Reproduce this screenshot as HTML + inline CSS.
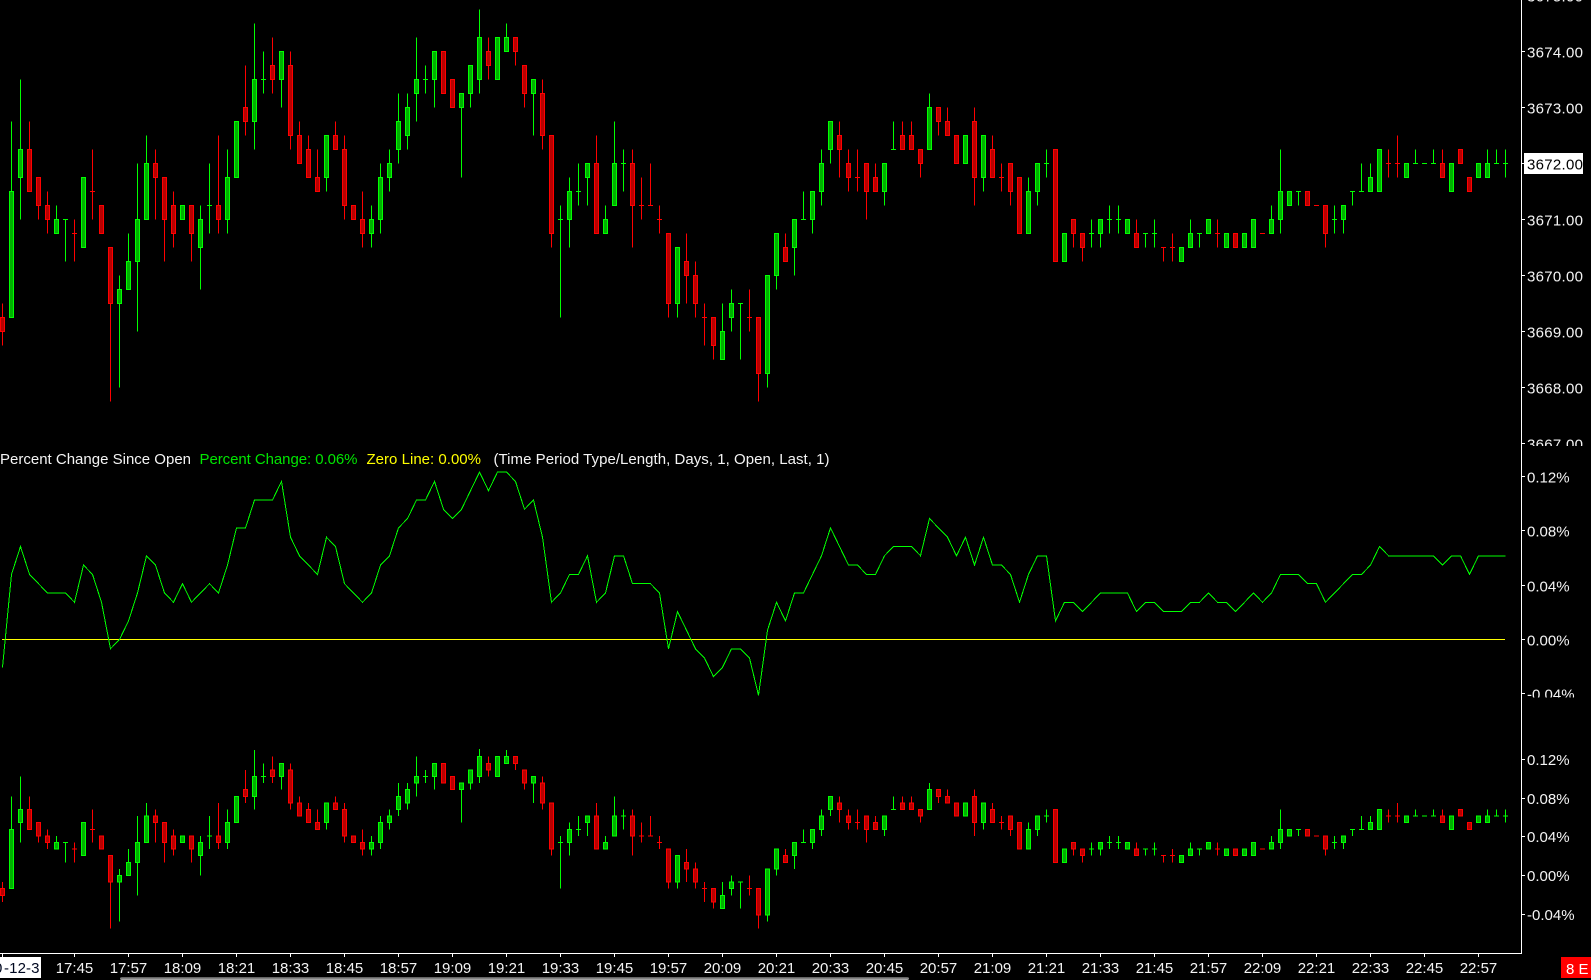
<!DOCTYPE html>
<html lang="en"><head><meta charset="utf-8"><title>Chart</title>
<style>
html,body{margin:0;padding:0;background:#000;width:1591px;height:980px;overflow:hidden}
svg{display:block;position:absolute;left:0;top:0}
text{font-family:"Liberation Sans",sans-serif;font-size:15px;fill:#f4f4f4}
.n{fill:none;vector-effect:non-scaling-stroke}
path,polyline{shape-rendering:crispEdges}
</style></head><body>
<svg width="1591" height="980" viewBox="0 0 1591 980" xmlns="http://www.w3.org/2000/svg">
<defs>
<clipPath id="cb"><rect x="0" y="749" width="1521" height="204"/></clipPath>
<clipPath id="cp"><rect x="1522" y="0" width="69" height="446"/></clipPath>
<clipPath id="cq"><rect x="1522" y="446" width="69" height="251.5"/></clipPath>
<clipPath id="cd"><rect x="0" y="957" width="41" height="21"/></clipPath>
<linearGradient id="sb" x1="0" y1="0" x2="0" y2="1"><stop offset="0" stop-color="#555"/><stop offset="1" stop-color="#b4b4b4"/></linearGradient>
<g id="c">
<path class="n" stroke="#00ff00" stroke-width="1" vector-effect="non-scaling-stroke" d="M1 8V13M2 5V15M6 14V15M7 15V18M7 15m-.28 0h.56M13 19V27M14 16V18M15 11V23M16 9V11M22 14V20M23 11V16M23 14m-.28 0h.56M25 10V16M28 1V10M29 3V6M29 5m-.28 0h.56M31 5V7M36 12V13M41 14V17M42 11V16M43 10V13M44 6V11M45 6V10M46 2V8M47 4V6M47 5m-.28 0h.56M48 5V7M51 7V12M52 6V7M53 0V6M56 1V2M59 6V9M62 14V22M62 15m-.28 0h.56M63 12V17M64 11V14M64 13m-.28 0h.56M65 12V14M67 14V15M68 8V11M69 10V13M69 11m-.28 0h.56M75 21V22M80 21V23M81 20V23M82 21V25M82 21m-.28 0h.56M85 26V27M86 19V20M88 17V19M89 13V15M89 15m-.28 0h.56M90 15V16M91 10V14M92 10V11M98 13V14M99 8V10M99 10m-.28 0h.56M103 6V7M109 12V13M114 12V13M115 13V14M116 10V12M116 11m-.28 0h.56M121 15V17M121 16m-.28 0h.56M122 16V17M123 14V16M123 15m-.28 0h.56M124 14V16M124 15m-.28 0h.56M127 16V17M127 16m-.28 0h.56M128 15V17M128 16m-.28 0h.56M132 15V16M133 16V17M133 16m-.28 0h.56M141 14V15M142 10V16M144 13V14M144 13m-.28 0h.56M148 14V16M148 15m-.28 0h.56M149 15V16M150 13V14M150 13m-.28 0h.56M151 11V13M151 13m-.28 0h.56M152 11V12M157 10V11M157 11m-.28 0h.56M158 11m-.28 0h.56M159 10V11M159 11m-.28 0h.56M165 10V11M166 10V11M166 11m-.28 0h.56M167 10V12M167 11m-.28 0h.56"/>
<path stroke="#00ff00" fill="#00b000" stroke-width="1" vector-effect="non-scaling-stroke" d="M1 13m-.222 0h.444V22h-.444zM2 10m-.222 0h.444V12h-.444zM6 15m-.222 0h.444V16h-.444zM9 12m-.222 0h.444V17h-.444zM13 20m-.222 0h.444V21h-.444zM14 18m-.222 0h.444V20h-.444zM15 15m-.222 0h.444V18h-.444zM16 11m-.222 0h.444V15h-.444zM20 14m-.222 0h.444V15h-.444zM22 15m-.222 0h.444V17h-.444zM25 12m-.222 0h.444V15h-.444zM26 8m-.222 0h.444V12h-.444zM28 5m-.222 0h.444V8h-.444zM31 3m-.222 0h.444V5h-.444zM36 9m-.222 0h.444V12h-.444zM41 15m-.222 0h.444V16h-.444zM42 12m-.222 0h.444V15h-.444zM43 11m-.222 0h.444V12h-.444zM44 8m-.222 0h.444V10h-.444zM45 7m-.222 0h.444V9h-.444zM46 5m-.222 0h.444V6h-.444zM48 3m-.222 0h.444V5h-.444zM51 6m-.222 0h.444V7h-.444zM52 4m-.222 0h.444V6h-.444zM53 2m-.222 0h.444V5h-.444zM55 2m-.222 0h.444V5h-.444zM56 2m-.222 0h.444V3h-.444zM59 5m-.222 0h.444V6h-.444zM63 13m-.222 0h.444V15h-.444zM65 11m-.222 0h.444V12h-.444zM67 15m-.222 0h.444V16h-.444zM68 11m-.222 0h.444V14h-.444zM75 17m-.222 0h.444V21h-.444zM80 23m-.222 0h.444V25h-.444zM81 21m-.222 0h.444V22h-.444zM85 19m-.222 0h.444V26h-.444zM86 16m-.222 0h.444V19h-.444zM88 15m-.222 0h.444V17h-.444zM90 13m-.222 0h.444V15h-.444zM91 11m-.222 0h.444V13h-.444zM92 8m-.222 0h.444V10h-.444zM98 11m-.222 0h.444V13h-.444zM103 7m-.222 0h.444V10h-.444zM107 9m-.222 0h.444V11h-.444zM109 9m-.222 0h.444V12h-.444zM114 13m-.222 0h.444V16h-.444zM115 11m-.222 0h.444V13h-.444zM118 16m-.222 0h.444V18h-.444zM122 15m-.222 0h.444V16h-.444zM125 15m-.222 0h.444V16h-.444zM131 17m-.222 0h.444V18h-.444zM132 16m-.222 0h.444V17h-.444zM134 15m-.222 0h.444V16h-.444zM136 16m-.222 0h.444V17h-.444zM138 16m-.222 0h.444V17h-.444zM139 15m-.222 0h.444V17h-.444zM141 15m-.222 0h.444V16h-.444zM142 13m-.222 0h.444V15h-.444zM143 13m-.222 0h.444V14h-.444zM149 14m-.222 0h.444V15h-.444zM152 12m-.222 0h.444V13h-.444zM153 10m-.222 0h.444V13h-.444zM156 11m-.222 0h.444V12h-.444zM161 11m-.222 0h.444V13h-.444zM164 11m-.222 0h.444V12h-.444zM165 11m-.222 0h.444V12h-.444z"/>
<path class="n" stroke="#ff0000" stroke-width="1" vector-effect="non-scaling-stroke" d="M0 21V24M3 8V10M4 14V15M5 13V16M8 15V18M8 16m-.28 0h.56M10 10V15M10 13m-.28 0h.56M12 21V28M17 10V15M18 15V18M19 13V17M21 16V18M24 9V16M27 4V9M30 2V6M32 3V10M33 8V9M34 9V10M35 10V12M37 8V9M38 9V15M40 13V17M54 2V5M57 3V4M58 6V7M60 5V10M61 16V17M66 9V11M70 10V17M71 12V15M71 14m-.28 0h.56M72 11V14M72 14m-.28 0h.56M73 14V16M73 15m-.28 0h.56M74 21V22M76 16V21M77 18V22M78 21V24M78 22m-.28 0h.56M79 24V25M83 20V23M83 22m-.28 0h.56M84 26V28M87 16V17M93 8V12M94 10V13M95 10V13M95 12m-.28 0h.56M96 13V15M97 11V12M100 8V9M101 8V9M102 11V12M104 8V9M105 7V8M108 7V14M110 9V10M111 11V13M111 12m-.28 0h.56M112 13V14M119 16V17M120 17V18M126 15V16M129 17V18M129 17m-.28 0h.56M130 16V18M130 17m-.28 0h.56M135 15V17M135 16m-.28 0h.56M140 16m-.28 0h.56M146 14m-.28 0h.56M147 16V17M154 10V12M154 11m-.28 0h.56M155 9V12M155 11m-.28 0h.56M160 10V11"/>
<path stroke="#ff0000" fill="#b80000" stroke-width="1" vector-effect="non-scaling-stroke" d="M0 22m-.222 0h.444V23h-.444zM3 10m-.222 0h.444V13h-.444zM4 12m-.222 0h.444V14h-.444zM5 14m-.222 0h.444V15h-.444zM11 14m-.222 0h.444V16h-.444zM12 17m-.222 0h.444V21h-.444zM17 11m-.222 0h.444V12h-.444zM18 12m-.222 0h.444V15h-.444zM19 14m-.222 0h.444V16h-.444zM21 14m-.222 0h.444V16h-.444zM24 14m-.222 0h.444V15h-.444zM27 7m-.222 0h.444V8h-.444zM30 4m-.222 0h.444V5h-.444zM32 4m-.222 0h.444V9h-.444zM33 9m-.222 0h.444V11h-.444zM34 10m-.222 0h.444V12h-.444zM35 12m-.222 0h.444V13h-.444zM37 9m-.222 0h.444V10h-.444zM38 10m-.222 0h.444V14h-.444zM39 14m-.222 0h.444V15h-.444zM40 15m-.222 0h.444V16h-.444zM49 3m-.222 0h.444V6h-.444zM50 5m-.222 0h.444V7h-.444zM54 3m-.222 0h.444V4h-.444zM57 2m-.222 0h.444V3h-.444zM58 4m-.222 0h.444V6h-.444zM60 6m-.222 0h.444V9h-.444zM61 9m-.222 0h.444V16h-.444zM66 11m-.222 0h.444V16h-.444zM70 11m-.222 0h.444V14h-.444zM74 16m-.222 0h.444V21h-.444zM76 18m-.222 0h.444V19h-.444zM77 19m-.222 0h.444V21h-.444zM79 22m-.222 0h.444V24h-.444zM84 22m-.222 0h.444V26h-.444zM87 17m-.222 0h.444V18h-.444zM93 9m-.222 0h.444V10h-.444zM94 11m-.222 0h.444V12h-.444zM96 11m-.222 0h.444V13h-.444zM97 12m-.222 0h.444V13h-.444zM100 9m-.222 0h.444V10h-.444zM101 9m-.222 0h.444V10h-.444zM102 10m-.222 0h.444V11h-.444zM104 7m-.222 0h.444V8h-.444zM105 8m-.222 0h.444V9h-.444zM106 9m-.222 0h.444V11h-.444zM108 8m-.222 0h.444V12h-.444zM110 10m-.222 0h.444V12h-.444zM112 11m-.222 0h.444V13h-.444zM113 12m-.222 0h.444V16h-.444zM117 10m-.222 0h.444V18h-.444zM119 15m-.222 0h.444V16h-.444zM120 16m-.222 0h.444V17h-.444zM126 16m-.222 0h.444V17h-.444zM137 16m-.222 0h.444V17h-.444zM145 13m-.222 0h.444V14h-.444zM147 14m-.222 0h.444V16h-.444zM160 11m-.222 0h.444V12h-.444zM162 10m-.222 0h.444V11h-.444zM163 12m-.222 0h.444V13h-.444z"/>
</g>
</defs>

<use href="#c" transform="matrix(9,0,0,14,2.5,9.5)"/>
<g clip-path="url(#cb)"><use href="#c" transform="matrix(9,0,0,6.6,2.5,743.5)"/></g>

<path d="M2 639.5H1505" stroke="#ffff00" stroke-width="1" fill="none"/>
<polyline class="n" stroke="#00ff00" stroke-width="1" transform="matrix(9,0,0,9.3,2.5,453.5)" points="0,23 1,13 2,10 3,13 4,14 5,15 6,15 7,15 8,16 9,12 10,13 11,16 12,21 13,20 14,18 15,15 16,11 17,12 18,15 19,16 20,14 21,16 22,15 23,14 24,15 25,12 26,8 27,8 28,5 29,5 30,5 31,3 32,9 33,11 34,12 35,13 36,9 37,10 38,14 39,15 40,16 41,15 42,12 43,11 44,8 45,7 46,5 47,5 48,3 49,6 50,7 51,6 52,4 53,2 54,4 55,2 56,2 57,3 58,6 59,5 60,9 61,16 62,15 63,13 64,13 65,11 66,16 67,15 68,11 69,11 70,14 71,14 72,14 73,15 74,21 75,17 76,19 77,21 78,22 79,24 80,23 81,21 82,21 83,22 84,26 85,19 86,16 87,18 88,15 89,15 90,13 91,11 92,8 93,10 94,12 95,12 96,13 97,13 98,11 99,10 100,10 101,10 102,11 103,7 104,8 105,9 106,11 107,9 108,12 109,9 110,12 111,12 112,13 113,16 114,13 115,11 116,11 117,18 118,16 119,16 120,17 121,16 122,15 123,15 124,15 125,15 126,17 127,16 128,16 129,17 130,17 131,17 132,16 133,16 134,15 135,16 136,16 137,17 138,16 139,15 140,16 141,15 142,13 143,13 144,13 145,14 146,14 147,16 148,15 149,14 150,13 151,13 152,12 153,10 154,11 155,11 156,11 157,11 158,11 159,11 160,12 161,11 162,11 163,13 164,11 165,11 166,11 167,11"/>

<path d="M1521.5 0V953.5H0" stroke="#fff" stroke-width="1" fill="none"/>
<path stroke="#fff" stroke-width="1" fill="none" d="M1522 51.5h3M1522 107.5h3M1522 163.5h3M1522 219.5h3M1522 275.5h3M1522 331.5h3M1522 387.5h3M1522 443.5h3M1522 476.5h3M1522 530.5h3M1522 585.5h3M1522 639.5h3M1522 693.5h3M1522 759.5h3M1522 798.5h3M1522 836.5h3M1522 875.5h3M1522 914.5h3M2.5 954v3M74.5 954v3M128.5 954v3M182.5 954v3M236.5 954v3M290.5 954v3M344.5 954v3M398.5 954v3M452.5 954v3M506.5 954v3M560.5 954v3M614.5 954v3M668.5 954v3M722.5 954v3M776.5 954v3M830.5 954v3M884.5 954v3M938.5 954v3M992.5 954v3M1046.5 954v3M1100.5 954v3M1154.5 954v3M1208.5 954v3M1262.5 954v3M1316.5 954v3M1370.5 954v3M1424.5 954v3M1478.5 954v3"/>

<g clip-path="url(#cp)">
<text x="1527" y="1.5" textLength="56">3675.00</text>
<text x="1527" y="57.5" textLength="56">3674.00</text>
<text x="1527" y="113.5" textLength="56">3673.00</text>
<rect x="1524" y="153" width="59" height="21" fill="#fff"/>
<text x="1527" y="169.5" textLength="56" style="fill:#000">3672.00</text>
<text x="1527" y="225.5" textLength="56">3671.00</text>
<text x="1527" y="281.5" textLength="56">3670.00</text>
<text x="1527" y="337.5" textLength="56">3669.00</text>
<text x="1527" y="393.5" textLength="56">3668.00</text>
<text x="1527" y="449.5" textLength="56">3667.00</text>
</g>
<g clip-path="url(#cq)">
<text x="1527" y="482.5">0.12%</text>
<text x="1527" y="536.5">0.08%</text>
<text x="1527" y="591.5">0.04%</text>
<text x="1527" y="645.5">0.00%</text>
<text x="1527" y="699.5">-0.04%</text>
</g>
<text x="1527" y="765">0.12%</text>
<text x="1527" y="804">0.08%</text>
<text x="1527" y="842">0.04%</text>
<text x="1527" y="881">0.00%</text>
<text x="1527" y="920">-0.04%</text>

<text x="0" y="464" textLength="191">Percent Change Since Open</text>
<text x="199.5" y="464" textLength="158" style="fill:#00e600">Percent Change: 0.06%</text>
<text x="366.5" y="464" textLength="114.5" style="fill:#ffff00">Zero Line: 0.00%</text>
<text x="493.5" y="464" textLength="336">(Time Period Type/Length, Days, 1, Open, Last, 1)</text>

<rect x="0" y="957" width="41" height="21" fill="#fff"/>
<g clip-path="url(#cd)" style="--k:0"><text x="-6" y="973" style="fill:#000820">0</text><text x="4" y="973" textLength="35.5" style="fill:#000820">-12-3</text></g>
<g text-anchor="middle">
<text x="74.5" y="973">17:45</text><text x="128.5" y="973">17:57</text><text x="182.5" y="973">18:09</text><text x="236.5" y="973">18:21</text><text x="290.5" y="973">18:33</text><text x="344.5" y="973">18:45</text><text x="398.5" y="973">18:57</text><text x="452.5" y="973">19:09</text><text x="506.5" y="973">19:21</text><text x="560.5" y="973">19:33</text><text x="614.5" y="973">19:45</text><text x="668.5" y="973">19:57</text><text x="722.5" y="973">20:09</text><text x="776.5" y="973">20:21</text><text x="830.5" y="973">20:33</text><text x="884.5" y="973">20:45</text><text x="938.5" y="973">20:57</text><text x="992.5" y="973">21:09</text><text x="1046.5" y="973">21:21</text><text x="1100.5" y="973">21:33</text><text x="1154.5" y="973">21:45</text><text x="1208.5" y="973">21:57</text><text x="1262.5" y="973">22:09</text><text x="1316.5" y="973">22:21</text><text x="1370.5" y="973">22:33</text><text x="1424.5" y="973">22:45</text><text x="1478.5" y="973">22:57</text>
</g>
<rect x="1561" y="957" width="30" height="21" fill="#ff0000"/>
<text x="1566" y="974" style="fill:#fff">8 <tspan x="1578.5">E</tspan></text>
<rect x="120" y="977" width="789" height="3" rx="2" fill="url(#sb)"/>
</svg>
</body></html>
